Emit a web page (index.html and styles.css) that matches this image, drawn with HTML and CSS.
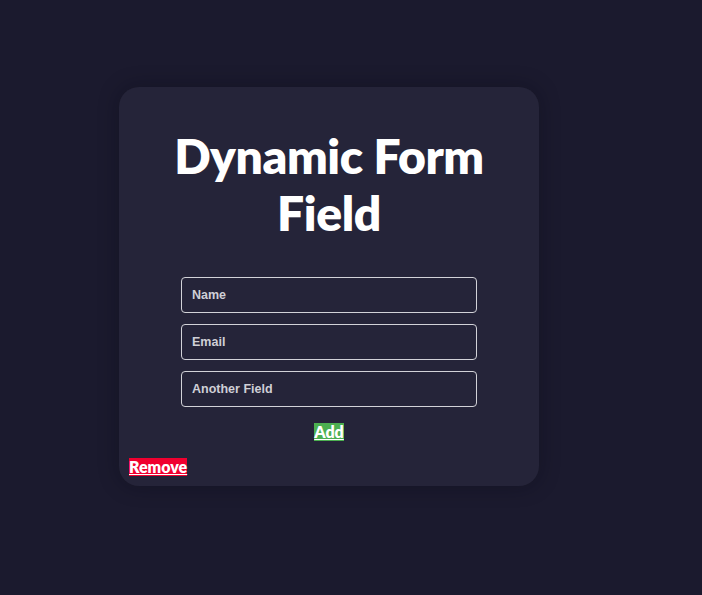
FILE: index.html
```html
<!DOCTYPE html>
<html>
<head>
<meta charset="utf-8">
<link rel="stylesheet" href="styles.css">
</head>
<body>
<div class="card">
  <h1 class="title">Dynamic Form Field</h1>
  <form class="fields">
    <input class="field" type="text" placeholder="Name">
    <input class="field" type="text" placeholder="Email">
    <input class="field" type="text" placeholder="Another Field">
  </form>
  <div class="add-row"><a class="btn add" href="#">Add</a></div>
  <div class="remove-row"><a class="btn remove" href="#">Remove</a></div>
</div>
</body>
</html>
```
FILE: styles.css
```css
html, body {
  margin: 0;
  padding: 0;
  background: #1b1a2e;
  height: 100%;
}
body {
  padding-top: 87px;
  padding-left: 119px;
  box-sizing: border-box;
  font-family: "Liberation Sans", Arial, sans-serif;
}
.card {
  width: 420px;
  box-sizing: border-box;
  background: #252439;
  border-radius: 20px;
  padding: 40px 10px 9px;
  box-shadow: 0 0 20px rgba(10, 10, 20, 0.35);
}
.title {
  margin: 0 0 36px;
  text-align: center;
  color: #fff;
  font-family: "Lato", sans-serif;
  font-weight: 800;
  font-size: 48px;
  line-height: 57px;
  letter-spacing: -0.4px;
}
.fields {
  display: flex;
  flex-direction: column;
  align-items: center;
  gap: 11px;
}
.field {
  width: 296px;
  height: 36px;
  box-sizing: border-box;
  background: transparent;
  border: 1px solid #d2d2d8;
  border-radius: 4px;
  padding: 0 10px;
  font-family: "Liberation Sans", Arial, sans-serif;
  font-weight: bold;
  font-size: 12.5px;
  color: #fff;
  outline: none;
}
.field::placeholder {
  color: #cfcfd6;
}
.add-row {
  text-align: center;
  margin-top: 16px;
}
.remove-row {
  margin-top: 16px;
}
.btn {
  display: inline-block;
  color: #fff;
  font-family: "Lato", sans-serif;
  font-weight: 800;
  font-size: 16px;
  line-height: 18px;
  text-decoration: underline;
}
.add {
  background: #4caf50;
}
.remove {
  background: #f0002f;
}
```
